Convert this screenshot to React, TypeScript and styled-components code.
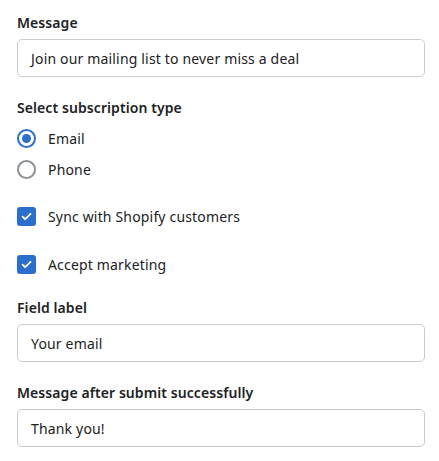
import React from "react";
import styled, { createGlobalStyle } from "styled-components";

const Global = createGlobalStyle`
  html, body { margin: 0; padding: 0; background: #ffffff; }
  body { font-family: "Segoe UI", "Noto Sans", "Open Sans", sans-serif; color: #202223; }
  * { box-sizing: border-box; }
`;

const Panel = styled.div`
  width: 439px;
  padding: 13px 14px 0 17px;
  display: flex;
  flex-direction: column;
`;

const Section = styled.div<{ $top: number }>`
  display: flex;
  flex-direction: column;
  margin-top: ${(p) => p.$top}px;
`;

const Label = styled.div`
  font-size: 14px;
  line-height: 20px;
  font-weight: 600;
  color: #202223;
  letter-spacing: 0.08px;
`;

const Input = styled.div`
  margin-top: 6px;
  height: 38px;
  border: 1px solid #c9cccf;
  border-radius: 5px;
  padding: 0 13px;
  display: flex;
  align-items: center;
  font-size: 14px;
  letter-spacing: 0.17px;
  color: #202223;
`;

const Option = styled.div<{ $top: number }>`
  display: flex;
  align-items: center;
  gap: 12px;
  height: 22px;
  margin-top: ${(p) => p.$top}px;
  font-size: 14px;
  letter-spacing: 0.17px;
  color: #202223;
`;

const Radio = styled.span<{ $on?: boolean }>`
  width: 19px;
  height: 19px;
  border-radius: 50%;
  border: 2px solid ${(p) => (p.$on ? "#2c6ecb" : "#8c9196")};
  display: flex;
  align-items: center;
  justify-content: center;
  flex: none;
  &::after {
    content: "";
    width: 9px;
    height: 9px;
    border-radius: 50%;
    background: ${(p) => (p.$on ? "#2c6ecb" : "transparent")};
  }
`;

const Check = styled.span`
  width: 19px;
  height: 19px;
  border-radius: 3px;
  background: #2c6ecb;
  display: flex;
  align-items: center;
  justify-content: center;
  flex: none;
`;

const Tick = () => (
  <svg width="11" height="9" viewBox="0 0 11 9" fill="none">
    <path d="M1.5 4.6 L4.2 7.2 L9.5 1.8" stroke="#fff" strokeWidth="1.8" strokeLinecap="round" strokeLinejoin="round" />
  </svg>
);

export default function App() {
  return (
    <>
      <Global />
      <Panel>
        <Section $top={0}>
          <Label>Message</Label>
          <Input>Join our mailing list to never miss a deal</Input>
        </Section>
        <Section $top={21}>
          <Label>Select subscription type</Label>
        </Section>
        <Option $top={9}>
          <Radio $on />
          Email
        </Option>
        <Option $top={9}>
          <Radio />
          Phone
        </Option>
        <Option $top={25}>
          <Check><Tick /></Check>
          Sync with Shopify customers
        </Option>
        <Option $top={26}>
          <Check><Tick /></Check>
          Accept marketing
        </Option>
        <Section $top={23}>
          <Label>Field label</Label>
          <Input>Your email</Input>
        </Section>
        <Section $top={21}>
          <Label>Message after submit successfully</Label>
          <Input>Thank you!</Input>
        </Section>
      </Panel>
    </>
  );
}
